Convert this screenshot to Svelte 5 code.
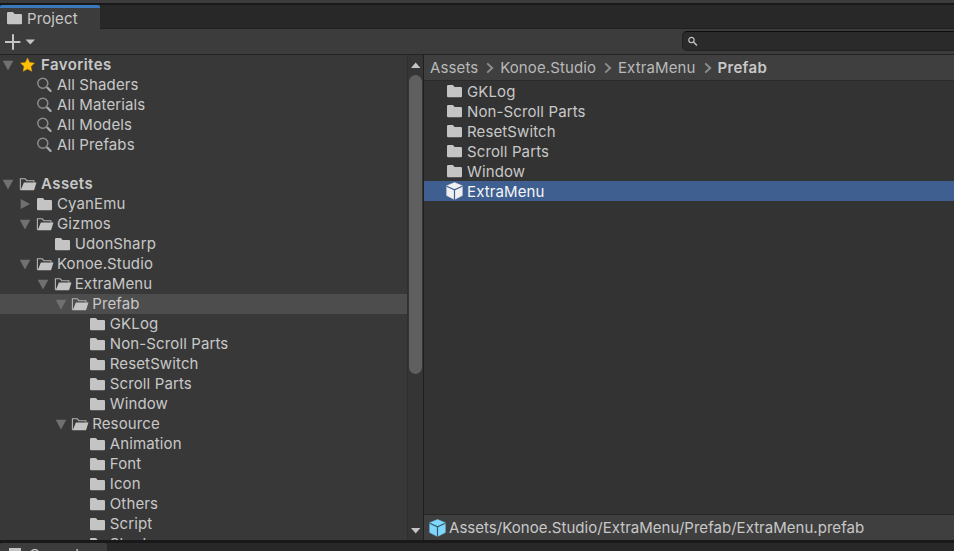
<script>
  const favorites = ['All Shaders', 'All Materials', 'All Models', 'All Prefabs'];

  const tree = [
    { name: 'Assets', depth: 0, state: 'open', bold: true },
    { name: 'CyanEmu', depth: 1, state: 'closed' },
    { name: 'Gizmos', depth: 1, state: 'open' },
    { name: 'UdonSharp', depth: 2 },
    { name: 'Konoe.Studio', depth: 1, state: 'open' },
    { name: 'ExtraMenu', depth: 2, state: 'open' },
    { name: 'Prefab', depth: 3, state: 'open', selected: true },
    { name: 'GKLog', depth: 4 },
    { name: 'Non-Scroll Parts', depth: 4 },
    { name: 'ResetSwitch', depth: 4 },
    { name: 'Scroll Parts', depth: 4 },
    { name: 'Window', depth: 4 },
    { name: 'Resource', depth: 3, state: 'open' },
    { name: 'Animation', depth: 4 },
    { name: 'Font', depth: 4 },
    { name: 'Icon', depth: 4 },
    { name: 'Others', depth: 4 },
    { name: 'Script', depth: 4 },
    { name: 'Shader', depth: 4 }
  ];

  const crumbs = ['Assets', 'Konoe.Studio', 'ExtraMenu', 'Prefab'];
  const files = ['GKLog', 'Non-Scroll Parts', 'ResetSwitch', 'Scroll Parts', 'Window'];
</script>

{#snippet folder()}
  <svg class="icon" width="18" height="20" viewBox="0 0 18 20">
    <path d="M1 5.2Q1 4 2.2 4H6.5Q7.2 4 7.7 4.8L8.5 6H14.9Q16 6 16 7.1V15.2Q16 16.3 14.9 16.3H2.2Q1 16.3 1 15.2Z" fill="#c4c4c4" />
  </svg>
{/snippet}

{#snippet openFolder()}
  <svg class="icon" width="18" height="20" viewBox="0 0 18 20">
    <path d="M1.8 15.8L1.4 15.4V4.7H6.2L7.8 6.7H14.9V8.4" fill="none" stroke="#b4b4b4" stroke-width="1.1" />
    <path d="M4.9 8.6H17.5L15.3 15.4Q15 16.3 14 16.3H1.7Z" fill="#c4c4c4" />
  </svg>
{/snippet}

{#snippet arrow(state)}
  <svg class="fold" width="12" height="20" viewBox="0 0 12 20">
    {#if state === 'open'}
      <path d="M.7 5.7H11.3L6 15.4Z" fill="#707070" />
    {:else if state === 'closed'}
      <path d="M1.7 4.9V15.1L11 10Z" fill="#707070" />
    {/if}
  </svg>
{/snippet}

{#snippet cube(face, seam)}
  <svg class="cube" width="18" height="20" viewBox="0 0 18 20">
    <path d="M8.5 1.5L16.3 4.8V14.6L8.5 18.6L.7 14.6V4.8Z" fill={face} stroke={face} stroke-width=".5" stroke-linejoin="round" />
    <path d="M.7 5.2L8.5 8.9L16.3 5.2M8.5 8.9V19" fill="none" stroke={seam} stroke-width="1.2" />
  </svg>
{/snippet}

<div class="editor">
  <div class="above"></div>
  <header class="tabs">
    <div class="tab">
      {@render folder()}
      <span>Project</span>
    </div>
  </header>
  <div class="toolbar">
    <svg class="add" width="32" height="25" viewBox="0 0 32 25">
      <path d="M0 13H15.4M8 5.3V20.7" fill="none" stroke="#c4c4c4" stroke-width="2" />
      <path d="M20.6 10.4H30L25.3 15.5Z" fill="#c4c4c4" />
    </svg>
    <div class="search">
      <svg width="11" height="11" viewBox="0 0 11 11">
        <circle cx="3.5" cy="4" r="2.7" fill="none" stroke="#c4c4c4" stroke-width="1.2" />
        <path d="M5.5 6L9 9.5" stroke="#c4c4c4" stroke-width="1.5" />
      </svg>
    </div>
  </div>

  <main>
    <aside>
      <div class="row bold">
        {@render arrow('open')}
        <svg class="icon" width="18" height="20" viewBox="0 0 18 20">
          <path d="M8.5 3.1L10.6 7.5L15.4 8.1L11.9 11.5L12.8 16.3L8.5 13.9L4.2 16.3L5.1 11.5L1.6 8.1L6.4 7.5Z" fill="#ffc107" stroke="#e6a800" stroke-width=".5" />
        </svg>
        <span>Favorites</span>
      </div>
      {#each favorites as name}
        <div class="row d1">
          {@render arrow()}
          <svg class="icon" width="18" height="20" viewBox="0 0 18 20">
            <circle cx="6.8" cy="8.3" r="5" fill="none" stroke="#8c8c8c" stroke-width="1.5" />
            <path d="M10.4 12L11.7 13.2" stroke="#8c8c8c" stroke-width="1.6" />
            <path d="M11.7 13L14.6 16" stroke="#aaa" stroke-width="2.3" stroke-linecap="round" />
          </svg>
          <span>{name}</span>
        </div>
      {/each}
      <div class="gap"></div>
      {#each tree as item}
        <div class="row d{item.depth}" class:bold={item.bold} class:selected={item.selected}>
          {@render arrow(item.state)}
          {#if item.state === 'open'}{@render openFolder()}{:else}{@render folder()}{/if}
          <span>{item.name}</span>
        </div>
      {/each}
    </aside>

    <div class="scrollbar">
      <svg width="15" height="20" viewBox="0 0 15 20"><path d="M3 13H12.4L7.7 7.6Z" fill="#c4c4c4" /></svg>
      <div class="thumb"></div>
      <svg class="down" width="15" height="20" viewBox="0 0 15 20"><path d="M3 8H12.4L7.7 13.4Z" fill="#c4c4c4" /></svg>
    </div>

    <section>
      <nav>
        {#each crumbs as crumb, i}
          {#if i}
            <svg width="8" height="12" viewBox="0 0 8 12"><path d="M1.2 1.4L6.2 6L1.2 10.6" fill="none" stroke="#8f8f8f" stroke-width="1.9" /></svg>
          {/if}
          <span class:current={i === crumbs.length - 1}>{crumb}</span>
        {/each}
      </nav>
      <div class="files">
        {#each files as name}
          <div class="file">{@render folder()}<span>{name}</span></div>
        {/each}
        <div class="file active">{@render cube('#f0f0f0', '#3e5f90')}<span>ExtraMenu</span></div>
      </div>
      <footer>
        {@render cube('#7fd6fd', '#33596b')}
        <span>Assets/Konoe.Studio/ExtraMenu/Prefab/ExtraMenu.prefab</span>
      </footer>
    </section>
  </main>

  <div class="below">
    <div class="tab console">
      <svg width="12" height="12" viewBox="0 0 12 12"><path d="M0 0H12V12H0Z" fill="#c4c4c4" /></svg>
      <span>Console</span>
    </div>
  </div>
</div>

<style>
  :global(body) { background: #282828; overflow: hidden; }
  .editor {
    width: 954px; height: 551px; overflow: hidden;
    display: flex; flex-direction: column;
    font: 15px/20px Inter, "Liberation Sans", sans-serif;
    letter-spacing: .12px; color: #c8c8c8; white-space: nowrap;
  }
  svg { display: block; flex: none; }
  .above { height: 5px; flex: none; box-sizing: border-box; background: #3c3c3c; border-bottom: 2px solid #191919; }
  .tabs { height: 24px; flex: none; display: flex; background: linear-gradient(#282828 23px, #202020 23px); }
  .tab {
    box-sizing: border-box; width: 100px; height: 24px; padding-left: 6px;
    display: flex; align-items: center; background: #3c3c3c;
    border-top: 3px solid #3a79bb; border-radius: 2px 2px 0 0;
  }
  .tab span { padding-left: 3px; }
  .tab .icon { margin-top: -1px; }
  .toolbar {
    height: 26px; flex: none; box-sizing: border-box; padding-left: 5px;
    display: flex; justify-content: space-between; background: #3c3c3c; border-bottom: 1px solid #232323;
  }
  .search {
    box-sizing: border-box; width: 280px; height: 20px; margin: 2px -8px 0 0; padding: 4px 0 0 5px;
    background: #2a2a2a; border: 1px solid #212121; border-top-color: #0d0d0d; border-radius: 5px;
  }
  main { height: 485px; flex: none; display: flex; }
  aside { width: 407px; overflow: hidden; background: #383838; }
  .row { height: 20px; display: flex; align-items: center; padding-left: 2px; }
  .d1 { padding-left: 19.3px; }
  .d2 { padding-left: 37px; }
  .d3 { padding-left: 54.5px; }
  .d4 { padding-left: 72.1px; }
  .row .icon { margin-left: 4.5px; }
  .row span { padding-left: 3.2px; }
  .bold { font-weight: 600; letter-spacing: .42px; }
  .row.bold span { padding-left: 4.5px; }
  .selected { background: #4d4d4d; }
  .gap { height: 19px; }
  .scrollbar {
    box-sizing: border-box; width: 17px; display: flex; flex-direction: column;
    background: #353535; border-left: 1px solid #2f2f2f; border-right: 1px solid #1f1f1f;
  }
  .thumb { width: 13px; height: 299px; margin-left: 1px; background: #5f5f5f; border-radius: 7px; }
  .down { margin-top: auto; }
  section { flex: 1; display: flex; flex-direction: column; background: #333; }
  nav {
    height: 26px; box-sizing: border-box; padding-left: 6px; display: flex; align-items: center;
    background: #3f3f3f; border-bottom: 1px solid #2b2b2b; color: #b9b9b9;
  }
  nav svg { margin: 0 5.8px 0 8px; }
  .current { font-weight: 600; color: #c8c8c8; letter-spacing: .36px; }
  .files { flex: 1; }
  .file { height: 20px; display: flex; align-items: center; padding-left: 22px; }
  .file span { padding: 2px 0 0 3px; }
  .active { background: #3e5f90; color: #f6f6f6; }
  footer {
    height: 26px; box-sizing: border-box; padding-left: 4.5px; display: flex; align-items: center;
    background: #3f3f3f; border-top: 1px solid #272727; letter-spacing: .03px;
  }
  footer span { padding-left: 2.5px; }
  .below { height: 11px; flex: none; box-sizing: border-box; border-top: 3px solid #191919; background: #282828; overflow: hidden; }
  .console { width: 107px; border-top: 0; padding: 5px 0 0 9px; align-items: flex-start; }
  .console span { padding: 0 0 0 8px; margin-top: -3px; }
</style>
